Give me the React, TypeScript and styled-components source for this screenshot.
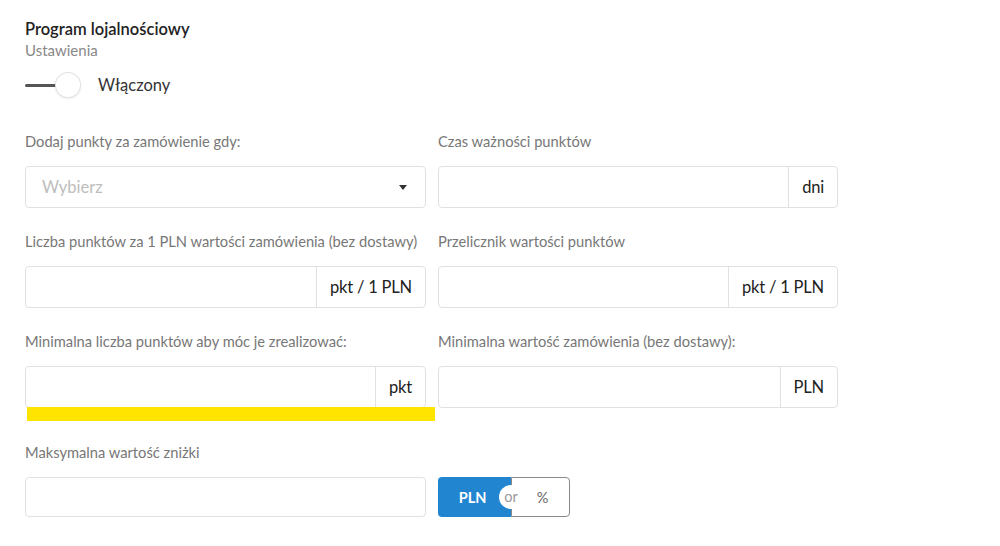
import React from 'react';
import styled, { createGlobalStyle } from 'styled-components';

const GlobalStyle = createGlobalStyle`
  body {
    margin: 0;
    background: #fff;
    font-family: Lato, 'Open Sans', sans-serif;
    color: #333;
  }
`;

const Page = styled.div`
  padding: 19px 0 0 25px;
`;

const Title = styled.div`
  font-size: 16.5px;
  line-height: 20px;
  font-weight: 600;
  color: #222;
`;

const Subtitle = styled.div`
  font-size: 15px;
  line-height: 20px;
  color: #888;
  margin-top: 1px;
`;

const ToggleRow = styled.label`
  display: flex;
  align-items: center;
  gap: 18px;
  margin-top: 10px;
  height: 30px;
`;

const Switch = styled.span`
  position: relative;
  width: 55px;
  height: 26px;
  display: inline-block;
  &::before {
    content: '';
    position: absolute;
    left: 0;
    top: 12px;
    width: 40px;
    height: 3px;
    border-radius: 2px;
    background: #555;
  }
`;

const Thumb = styled.span`
  position: absolute;
  left: 31px;
  top: 1px;
  width: 24px;
  height: 24px;
  border-radius: 50%;
  background: #fff;
  box-shadow: 0 0 0 1px #e2e2e2, 0 1px 3px rgba(0, 0, 0, 0.15);
`;

const ToggleText = styled.span`
  font-size: 16.5px;
  color: #333;
`;

const Grid = styled.div`
  display: grid;
  grid-template-columns: 401px 400px;
  column-gap: 12px;
  row-gap: 23px;
  margin-top: 31px;
`;

const Field = styled.div<{ $wide?: boolean }>`
  position: relative;
  grid-column: ${(p) => (p.$wide ? '1 / span 2' : 'auto')};
  margin-top: ${(p) => (p.$wide ? 11 : 0)}px;
`;

const Label = styled.div`
  font-size: 14.7px;
  line-height: 20px;
  color: #777;
  margin-bottom: 15px;
  white-space: nowrap;
`;

const InputGroup = styled.div<{ $h?: number }>`
  display: flex;
  height: ${(p) => p.$h ?? 42}px;
  box-sizing: border-box;
  border: 1px solid #e1e1e1;
  border-radius: 4px;
  background: #fff;
`;

const Input = styled.input`
  flex: 1;
  min-width: 0;
  border: none;
  outline: none;
  background: transparent;
  padding: 0 16px;
  font: inherit;
  font-size: 16px;
`;

const Addon = styled.span`
  display: flex;
  align-items: center;
  padding: 0 13px;
  border-left: 1px solid #e1e1e1;
  font-size: 16.5px;
  color: #222;
  letter-spacing: -0.2px;
  white-space: nowrap;
`;

const Select = styled.div`
  display: flex;
  align-items: center;
  justify-content: space-between;
  height: 42px;
  box-sizing: border-box;
  padding: 0 16px;
  border: 1px solid #e1e1e1;
  border-radius: 4px;
  font-size: 16.5px;
  color: #bdbdbd;
`;

const Caret = styled.span`
  width: 0;
  height: 0;
  border-left: 4px solid transparent;
  border-right: 4px solid transparent;
  border-top: 5px solid #333;
  margin-right: 2px;
`;

const Highlight = styled.div`
  position: absolute;
  left: 2px;
  right: -9px;
  bottom: -13px;
  height: 14px;
  background: #ffe400;
`;

const MaxRow = styled.div`
  display: flex;
  gap: 12px;
  align-items: center;
`;

const MaxInput = styled(InputGroup)`
  width: 401px;
`;

const Segmented = styled.div`
  position: relative;
  display: flex;
  height: 40px;
`;

const SegButton = styled.button<{ $active?: boolean }>`
  box-sizing: border-box;
  height: 40px;
  font-family: inherit;
  font-size: 14.5px;
  font-weight: ${(p) => (p.$active ? 700 : 400)};
  border-radius: ${(p) => (p.$active ? '4px 0 0 4px' : '0 4px 4px 0')};
  background: ${(p) => (p.$active ? '#2185d0' : '#fff')};
  color: ${(p) => (p.$active ? '#fff' : '#666')};
  border: ${(p) => (p.$active ? 'none' : '1px solid #8a8a8a')};
  width: ${(p) => (p.$active ? 73 : 59)}px;
  padding: ${(p) => (p.$active ? '0 4px 0 0' : '0 0 0 4px')};
  cursor: pointer;
`;

const Or = styled.span`
  position: absolute;
  left: 61px;
  top: 8px;
  width: 24px;
  height: 24px;
  border-radius: 50%;
  background: #fff;
  color: #999;
  font-size: 14.5px;
  line-height: 23px;
  text-align: center;
`;

export default function App() {
  return (
    <>
      <GlobalStyle />
      <Page>
        <Title>Program lojalnościowy</Title>
        <Subtitle>Ustawienia</Subtitle>
        <ToggleRow>
          <Switch>
            <Thumb />
          </Switch>
          <ToggleText>Włączony</ToggleText>
        </ToggleRow>

        <Grid>
          <Field>
            <Label>Dodaj punkty za zamówienie gdy:</Label>
            <Select>
              <span>Wybierz</span>
              <Caret />
            </Select>
          </Field>
          <Field>
            <Label>Czas ważności punktów</Label>
            <InputGroup>
              <Input />
              <Addon>dni</Addon>
            </InputGroup>
          </Field>

          <Field>
            <Label>Liczba punktów za 1 PLN wartości zamówienia (bez dostawy)</Label>
            <InputGroup>
              <Input />
              <Addon>pkt / 1 PLN</Addon>
            </InputGroup>
          </Field>
          <Field>
            <Label>Przelicznik wartości punktów</Label>
            <InputGroup>
              <Input />
              <Addon>pkt / 1 PLN</Addon>
            </InputGroup>
          </Field>

          <Field>
            <Label>Minimalna liczba punktów aby móc je zrealizować:</Label>
            <InputGroup>
              <Input />
              <Addon>pkt</Addon>
            </InputGroup>
            <Highlight />
          </Field>
          <Field>
            <Label>Minimalna wartość zamówienia (bez dostawy):</Label>
            <InputGroup>
              <Input />
              <Addon>PLN</Addon>
            </InputGroup>
          </Field>

          <Field $wide>
            <Label>Maksymalna wartość zniżki</Label>
            <MaxRow>
              <MaxInput $h={40}>
                <Input />
              </MaxInput>
              <Segmented>
                <SegButton $active>PLN</SegButton>
                <SegButton>%</SegButton>
                <Or>or</Or>
              </Segmented>
            </MaxRow>
          </Field>
        </Grid>
      </Page>
    </>
  );
}
